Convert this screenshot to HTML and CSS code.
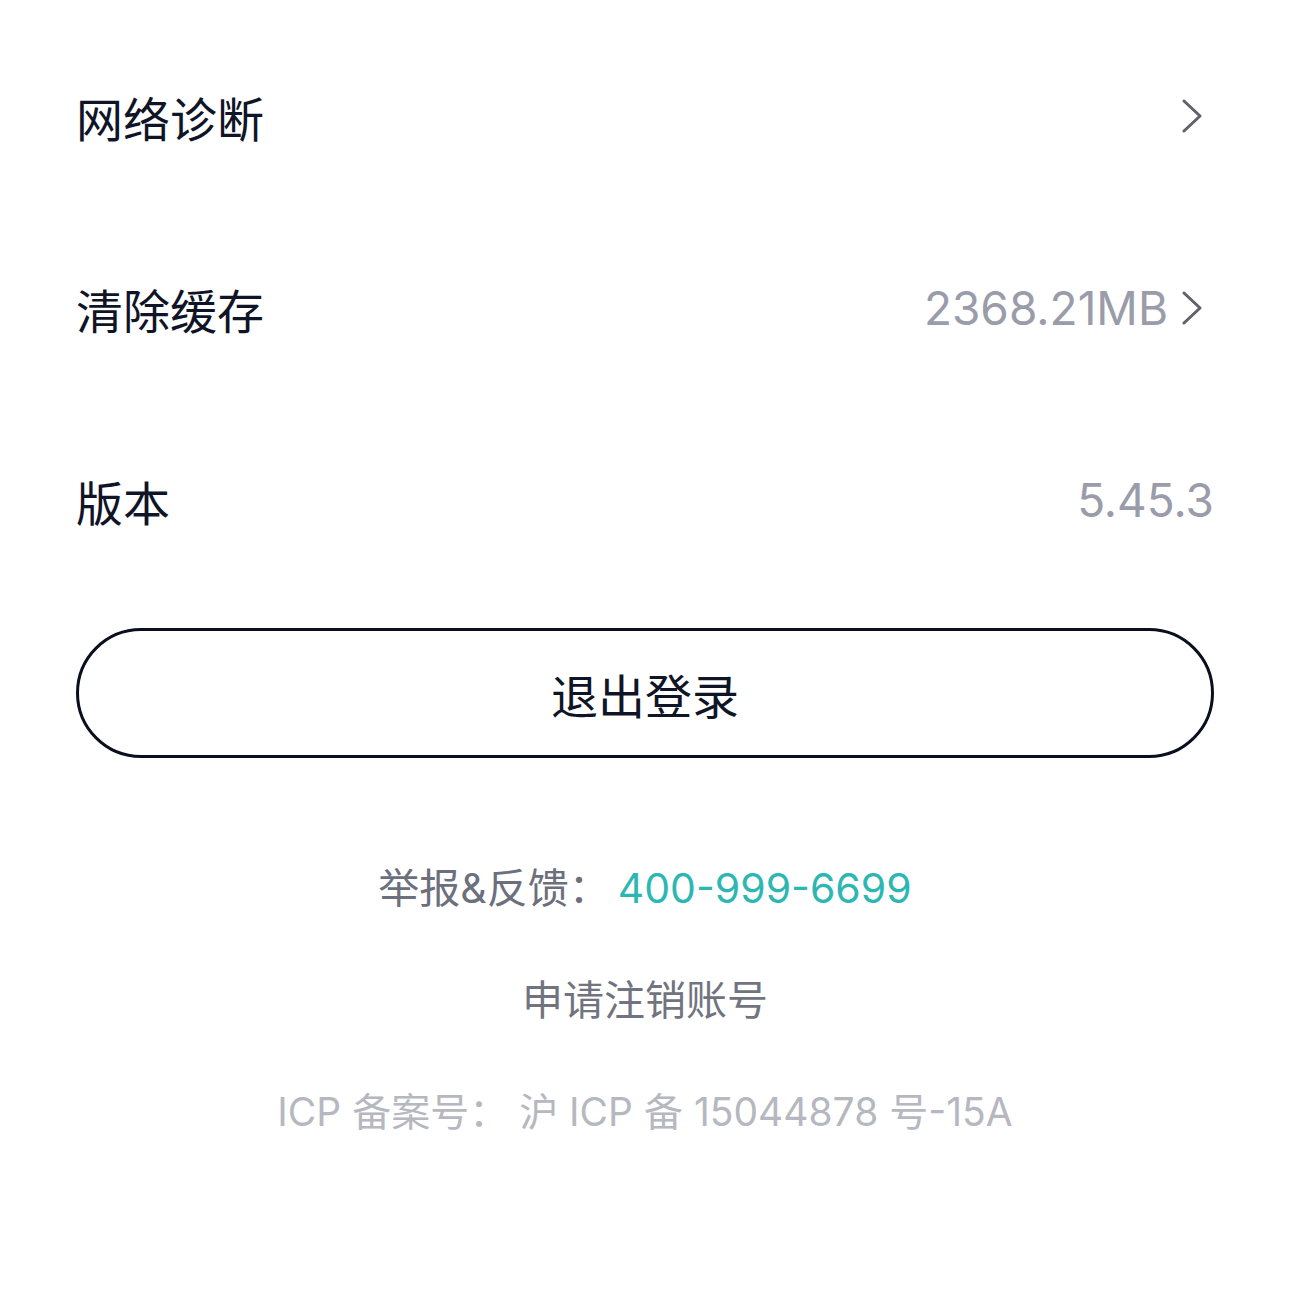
FILE: index.html
```html
<!DOCTYPE html>
<html lang="zh-CN">
<head>
  <meta charset="UTF-8">
  <meta name="viewport" content="width=device-width, initial-scale=1.0">
  <title>设置</title>
  <link rel="stylesheet" href="styles.css">
</head>
<body>

<ul class="settings">
  <li class="row">
    <span class="row-title">网络诊断</span>
    <span class="row-side">
      <svg class="chevron" viewBox="0 0 20 34" width="20" height="34"><path d="M2 2 L18 17 L2 32" /></svg>
    </span>
  </li>
  <li class="row">
    <span class="row-title">清除缓存</span>
    <span class="row-side">
      <span class="row-value">2368.21MB</span>
      <svg class="chevron" viewBox="0 0 20 34" width="20" height="34"><path d="M2 2 L18 17 L2 32" /></svg>
    </span>
  </li>
  <li class="row">
    <span class="row-title">版本</span>
    <span class="row-side">
      <span class="row-value">5.45.3</span>
    </span>
  </li>
</ul>

<div class="logout-wrap">
  <button class="logout">退出登录</button>
</div>

<div class="links">
  <p class="link report">举报&amp;反馈：<span class="phone">400-999-6699</span></p>
  <p class="link cancel">申请注销账号</p>
  <p class="link icp">ICP 备案号： 沪 ICP 备 15044878 号-15A</p>
</div>

</body>
</html>
```

FILE: styles.css
```css
body {
  margin: 0;
  background: #fff;
  font-family: Inter, "Noto Sans CJK SC", sans-serif;
  color: #0f1426;
}
.settings {
  list-style: none;
  margin: 0;
  padding: 20px 0 0;
}
.row {
  display: flex;
  justify-content: space-between;
  align-items: center;
  height: 192px;
  padding: 0 76px;
}
.row-title {
  font-size: 47px;
  font-weight: 400;
}
.row-side {
  display: flex;
  align-items: center;
  gap: 14px;
}
.row-value {
  font-size: 46px;
  color: #9a9caa;
}
.chevron {
  margin-right: 12px;
  fill: none;
  stroke: #5f6068;
  stroke-width: 3;
  stroke-linecap: round;
  stroke-linejoin: round;
}
.logout-wrap {
  padding: 32px 76px 0;
}
.logout {
  display: block;
  width: 100%;
  height: 130px;
  border: 3px solid #0a0f1e;
  border-radius: 65px;
  background: #fff;
  font-family: inherit;
  font-size: 47px;
  font-weight: 400;
  color: #0f1426;
}
.links {
  padding-top: 100px;
  text-align: center;
}
.link {
  margin: 0;
  height: 112px;
  line-height: 60px;
  font-size: 41px;
}
.report {
  color: #6c6f7d;
}
.phone {
  margin-left: 8px;
  color: #2db7b3;
}
.cancel {
  color: #717480;
}
.icp {
  color: #b6b8c0;
  font-size: 39px;
}
```
